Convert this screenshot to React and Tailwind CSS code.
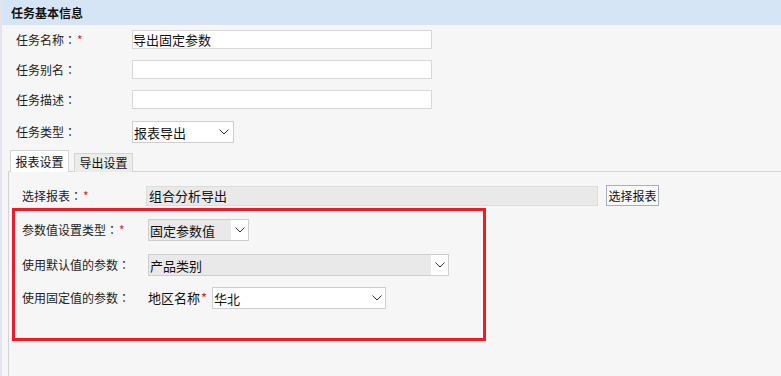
import React from 'react';

const FONT = "font-['Noto_Sans_CJK_SC','Microsoft_YaHei',sans-serif]";

const Chevron = () => (
  <svg width="10" height="6" viewBox="0 0 10 6" className="shrink-0">
    <polyline points="0.5,0.5 5,5 9.5,0.5" fill="none" stroke="#333" strokeWidth="1" />
  </svg>
);

const Star = () => <span className="text-[#e0202b] ml-[1px]">*</span>;

// fullwidth colon drawn centred, as the original font does
const Colon = () => <span className="font-['Noto_Sans_CJK_TC',sans-serif]">：</span>;

const Select = ({ value, width, grey }) => (
  <div
    className={`flex h-[22px] items-stretch border border-[#cfcfcf] ${grey ? 'bg-[#e9e9e9]' : 'bg-white'} ${width}`}
  >
    <span className="flex-1 flex items-center pl-[1px] text-[13px] text-[#111] leading-none">{value}</span>
    <span className="w-[17px] bg-white flex items-center justify-center">
      <Chevron />
    </span>
  </div>
);

const BasicRow = ({ label, required, children, className = '' }) => (
  <div className={`flex items-center ${className}`}>
    <div className="w-[116px] text-[12px] text-[#222]">
      {label}
      <Colon />
      {required && <Star />}
    </div>
    {children}
  </div>
);

const TextInput = ({ value = '' }) => (
  <div className="w-[300px] h-[19px] border border-[#d8d8d8] bg-white flex items-center text-[13px] text-[#111] leading-none">
    {value}
  </div>
);

const ParamRow = ({ label, required, children, className = '' }) => (
  <div className={`flex items-center ${className}`}>
    <div className="w-[126px] text-[12px] text-[#222]">
      {label}
      <Colon />
      {required && <Star />}
    </div>
    {children}
  </div>
);

export default function App() {
  return (
    <div className={`w-[781px] h-[376px] bg-[#f6f6f6] flex overflow-hidden ${FONT}`}>
      <div className="w-[2px] bg-[#e4e4ef]" />
      <div className="flex-1 flex flex-col">
        {/* header */}
        <div className="h-[25px] bg-[#d5e5f6] flex items-center pl-[9px] text-[12px] font-bold text-[#111]">
          任务基本信息
        </div>

        {/* basic info */}
        <div className="pl-[14px]">
          <BasicRow label="任务名称" required className="mt-[5px]">
            <TextInput value="导出固定参数" />
          </BasicRow>
          <BasicRow label="任务别名" className="mt-[11px]">
            <TextInput />
          </BasicRow>
          <BasicRow label="任务描述" className="mt-[11px]">
            <TextInput />
          </BasicRow>
          <BasicRow label="任务类型" className="mt-[12px]">
            <div className="w-[102px] h-[22px] border border-[#cfcfcf] bg-white flex items-center justify-between pl-[1px] pr-[4px] text-[13px] text-[#111] leading-none">
              报表导出
              <Chevron />
            </div>
          </BasicRow>
        </div>

        {/* tabs */}
        <div className="ml-[6px] mt-[7px] flex-1 flex flex-col">
          <div className="flex items-end gap-[5px] pl-[2px] relative z-10 -mb-px">
            <div className="w-[59px] h-[22px] bg-white border border-b-0 border-[#d4d4d4] flex items-center justify-center text-[12px] text-[#111]">
              报表设置
            </div>
            <div className="w-[59px] h-[19px] bg-[#ececec] border border-b-0 border-[#d4d4d4] flex items-center justify-center text-[12px] text-[#111]">
              导出设置
            </div>
          </div>
          <div className="flex-1 border-t border-l border-[#d4d4d4] pt-[13px] pl-[13px]">
            <div className="flex items-center">
              <div className="w-[124px] text-[12px] text-[#222]">
                选择报表<Colon /><Star />
              </div>
              <div className="w-[452px] h-[20px] border border-[#dcdcdc] bg-[#e9e9e9] flex items-center pl-[2px] text-[13px] text-[#111] leading-none">
                组合分析导出
              </div>
              <button className="ml-[8px] w-[53px] h-[21px] border border-[#a4b0c0] bg-[#f9f9f9] text-[12px] text-[#111] leading-none">
                选择报表
              </button>
            </div>

            {/* highlighted block */}
            <div className="mt-[2px] -ml-[10px] w-[474px] h-[133px] border-[3px] border-[#ee1c25] pl-[7px] pt-[8px]">
              <ParamRow label="参数值设置类型" required>
                <Select value="固定参数值" width="w-[101px]" grey />
              </ParamRow>
              <ParamRow label="使用默认值的参数" className="mt-[13px]">
                <Select value="产品类别" width="w-[301px]" grey />
              </ParamRow>
              <ParamRow label="使用固定值的参数" className="mt-[11px]">
                <span className="text-[13px] text-[#111]">
                  地区名称<Star />
                </span>
                <div className="ml-[5px]">
                  <Select value="华北" width="w-[174px]" />
                </div>
              </ParamRow>
            </div>
          </div>
        </div>
      </div>
    </div>
  );
}
